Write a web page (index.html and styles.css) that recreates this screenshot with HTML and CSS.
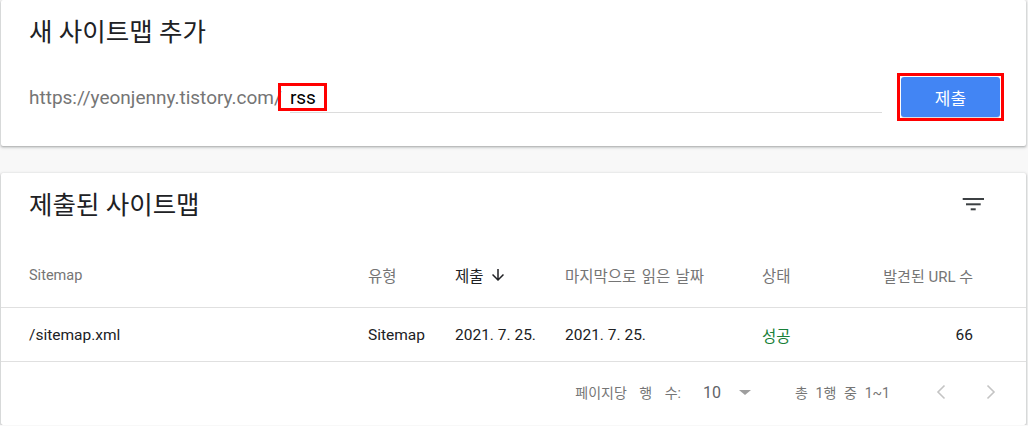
FILE: index.html
```html
<!DOCTYPE html>
<html lang="ko">
<head>
<meta charset="utf-8">
<title>Sitemaps</title>
<link rel="stylesheet" href="styles.css">
</head>
<body>
<section class="card add-card">
  <h2 class="card-title">새 사이트맵 추가</h2>
  <div class="add-row">
    <span class="url-prefix">https://yeonjenny.tistory.com/</span>
    <div class="field">
      <span class="field-value">rss</span>
      <span class="mark mark-rss"></span>
    </div>
    <span class="btn-wrap">
      <button class="submit-btn" type="button">제출</button>
      <span class="mark mark-btn"></span>
    </span>
  </div>
</section>

<section class="card list-card">
  <div class="list-head">
    <h2 class="card-title">제출된 사이트맵</h2>
    <svg class="filter-icon" width="24" height="14" viewBox="0 0 24 14" aria-hidden="true">
      <rect x="0.7" y="1" width="21.3" height="2"/>
      <rect x="4" y="6.3" width="14.7" height="2"/>
      <rect x="8.7" y="11.3" width="5" height="2"/>
    </svg>
  </div>
  <div class="trow thead">
    <span>Sitemap</span>
    <span class="ko">유형</span>
    <span class="ko sorted">제출<svg class="sort-arrow" width="18" height="18" viewBox="0 0 24 24" aria-hidden="true"><path d="M20 12l-1.41-1.41L13 16.17V4h-2v12.17l-5.58-5.59L4 12l8 8 8-8z"/></svg></span>
    <span class="ko">마지막으로 읽은 날짜</span>
    <span class="ko">상태</span>
    <span class="num mixed">발견된 URL 수</span>
  </div>
  <div class="trow tbody">
    <span>/sitemap.xml</span>
    <span>Sitemap</span>
    <span>2021. 7. 25.</span>
    <span>2021. 7. 25.</span>
    <span class="ok">성공</span>
    <span class="num">66</span>
  </div>
  <div class="tfoot">
    <span class="rows-label">페이지당 행 수:</span>
    <span class="rows-select">10<span class="caret"></span></span>
    <span class="range">총 1행 중 1~1</span>
    <span class="pager">
      <svg class="chev" width="24" height="24" viewBox="0 0 24 24" aria-hidden="true"><polyline points="15.5,5.5 9,12 15.5,18.5"/></svg>
      <svg class="chev" width="24" height="24" viewBox="0 0 24 24" aria-hidden="true"><polyline points="8.5,5.5 15,12 8.5,18.5"/></svg>
    </span>
  </div>
</section>
</body>
</html>
```
FILE: styles.css
```css
* { box-sizing: border-box; }

html, body {
  margin: 0;
  padding: 0;
}

body {
  background: #f8f8f8;
  font-family: Roboto, "Noto Sans CJK KR", sans-serif;
  color: #202124;
  padding: 0 2px 0 1px;
}

.card {
  background: #fff;
  border-radius: 2px;
  box-shadow: 0 1px 2px rgba(60, 64, 67, 0.3), 0 1px 3px 1px rgba(60, 64, 67, 0.15);
}

.card-title {
  margin: 0;
  font-size: 25.5px;
  line-height: 32px;
  font-weight: 400;
  color: #202124;
}

/* ---------- add card ---------- */
.add-card {
  height: 146px;
  padding: 16px 26px 0 28px;
}

.add-row {
  margin-top: 29px;
  height: 40px;
  display: flex;
  align-items: center;
}

.url-prefix {
  font-size: 19px;
  color: #757575;
  line-height: 22px;
  padding-top: 2px;
}

.field {
  position: relative;
  flex: 1;
  margin: 0 19px 4px 8px;
  height: 31px;
  align-self: flex-end;
  border-bottom: 1px solid #dcdcdc;
  display: flex;
  align-items: center;
}

.field-value {
  font-size: 19px;
  color: #000;
  line-height: 22px;
  padding-top: 2px;
}

.mark {
  position: absolute;
  border: 3px solid #ff0000;
}

.mark-rss {
  left: -12px;
  top: 1px;
  width: 49px;
  height: 28px;
}

.btn-wrap {
  position: relative;
  display: flex;
}

.mark-btn {
  left: -4px;
  top: -4px;
  right: -4px;
  bottom: -4px;
}

.submit-btn {
  width: 99px;
  height: 40px;
  border: 0;
  border-radius: 3px;
  background: #4285f4;
  color: #fff;
  font-family: Roboto, "Noto Sans CJK KR", sans-serif;
  font-size: 17px;
  box-shadow: 0 1px 1px rgba(0, 0, 0, 0.15);
}

/* ---------- list card ---------- */
.list-card {
  margin-top: 27px;
  padding-top: 16px;
  height: 252px;
}

.list-head {
  display: flex;
  align-items: center;
  justify-content: space-between;
  padding: 0 40px 0 28px;
  height: 32px;
}

.filter-icon {
  fill: #3c4043;
  margin-top: -3px;
}

.trow {
  display: grid;
  grid-template-columns: 339px 87px 110px 197px 1fr auto;
  align-items: center;
  padding: 0 53px 0 28px;
  border-bottom: 1px solid #e0e0e0;
}

.thead {
  margin-top: 22px;
  height: 65px;
  color: #757575;
  font-size: 14.5px;
}

.thead .ko {
  font-size: 15.5px;
  word-spacing: 1.5px;
}

.thead .mixed {
  font-size: 15px;
}

.tbody {
  height: 54px;
  color: #202124;
  font-size: 15.5px;
}

.sorted {
  color: #202124;
  display: flex;
  align-items: center;
}

.sort-arrow {
  fill: #202124;
  margin-left: 5px;
}

.num { justify-self: end; }

.ok { color: #188038; }

.tfoot {
  height: 60px;
  display: flex;
  align-items: center;
  justify-content: flex-end;
  padding-right: 23px;
  font-size: 14px;
  color: #757575;
}

.rows-label {
  word-spacing: 9px;
}

.rows-select {
  display: flex;
  align-items: center;
  margin-left: 22px;
  font-size: 16px;
  color: #5f6368;
}

.caret {
  width: 0;
  height: 0;
  margin-left: 18px;
  border-left: 6px solid transparent;
  border-right: 6px solid transparent;
  border-top: 5px solid #9e9e9e;
}

.range {
  margin-left: 44px;
  word-spacing: 4.3px;
}

.pager {
  display: flex;
  gap: 26px;
  margin-left: 39px;
}

.chev {
  fill: none;
  stroke: #c4c4c4;
  stroke-width: 1.6;
}
```
